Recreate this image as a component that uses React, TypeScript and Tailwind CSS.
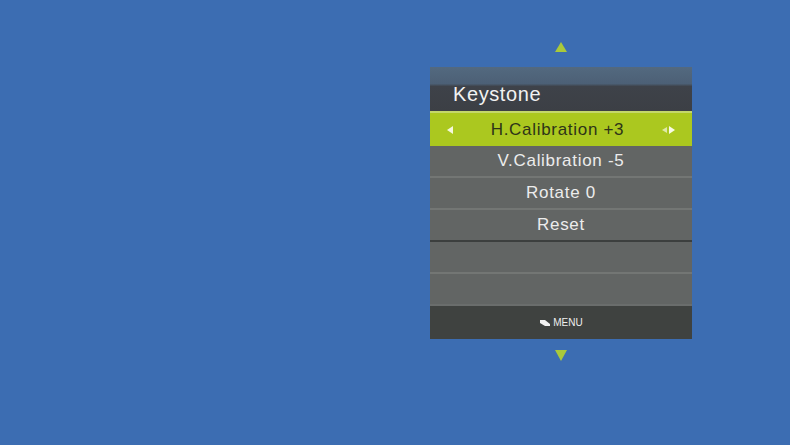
export default function App() {
  const rows = [
    { label: 'V.Calibration -5', line: 'border-[#737674]' },
    { label: 'Rotate 0', line: 'border-[#737674]' },
    { label: 'Reset', line: 'border-[#3c3f3e]' },
    { label: '', line: 'border-[#737674]' },
    { label: '', line: 'border-[#6a6d6c]' },
  ]

  return (
    <div className="w-[790px] h-[445px] bg-[#3c6db2] pl-[430px] pt-[42px] font-['Liberation_Sans',Arial,sans-serif]">
      <div className="w-[262px] flex flex-col items-center">
        {/* up arrow */}
        <div className="w-0 h-0 border-l-[6px] border-r-[6px] border-b-[10px] border-l-transparent border-r-transparent border-b-[#a9c93a]" />

        {/* panel */}
        <div className="mt-[15px] w-full flex flex-col bg-[#626564]">
          {/* header */}
          <div className="h-[44px] bg-[linear-gradient(to_bottom,#53697f_0%,#4c6076_38%,#3e4249_44%,#3c3f45_100%)] flex items-end pl-[23px] pb-[7px]">
            <span className="text-[20px] leading-none tracking-[0.6px] text-[#f2f2f2]">Keystone</span>
          </div>

          {/* selected row */}
          <div className="h-[35px] bg-[#abc81f] border-t-2 border-[#c4d86a] flex items-center px-[17px]">
            <div className="w-0 h-0 border-t-[4px] border-b-[4px] border-r-[6px] border-t-transparent border-b-transparent border-r-[#f4f8dc]" />
            <span className="flex-1 text-center text-[17px] tracking-[0.7px] text-[#2e3418]">H.Calibration +3</span>
            <div className="flex items-center gap-[2px]">
              <div className="w-0 h-0 border-t-[3px] border-b-[3px] border-r-[5px] border-t-transparent border-b-transparent border-r-[#dfe9a8]" />
              <div className="w-0 h-0 border-t-[4px] border-b-[4px] border-l-[6px] border-t-transparent border-b-transparent border-l-[#f8fbe6]" />
            </div>
          </div>

          {rows.map((r, i) => (
            <div
              key={i}
              className={`h-[32px] border-b-2 ${r.line} flex items-center justify-center text-[17px] tracking-[0.7px] text-[#ececec]`}
            >
              {r.label}
            </div>
          ))}

          {/* footer */}
          <div className="h-[33px] bg-[#3f4240] flex items-center justify-center gap-[2px]">
            <svg width="12" height="10" viewBox="0 0 12 10">
              <path d="M1 2 L6 2 L11 6 L11 8 L6 8 L1 5 Z" fill="#f2f2f2" />
            </svg>
            <span className="text-[10px] text-[#eeeeee]">MENU</span>
          </div>
        </div>

        {/* down arrow */}
        <div className="mt-[11px] w-0 h-0 border-l-[6px] border-r-[6px] border-t-[11px] border-l-transparent border-r-transparent border-t-[#a9c93a]" />
      </div>
    </div>
  )
}
